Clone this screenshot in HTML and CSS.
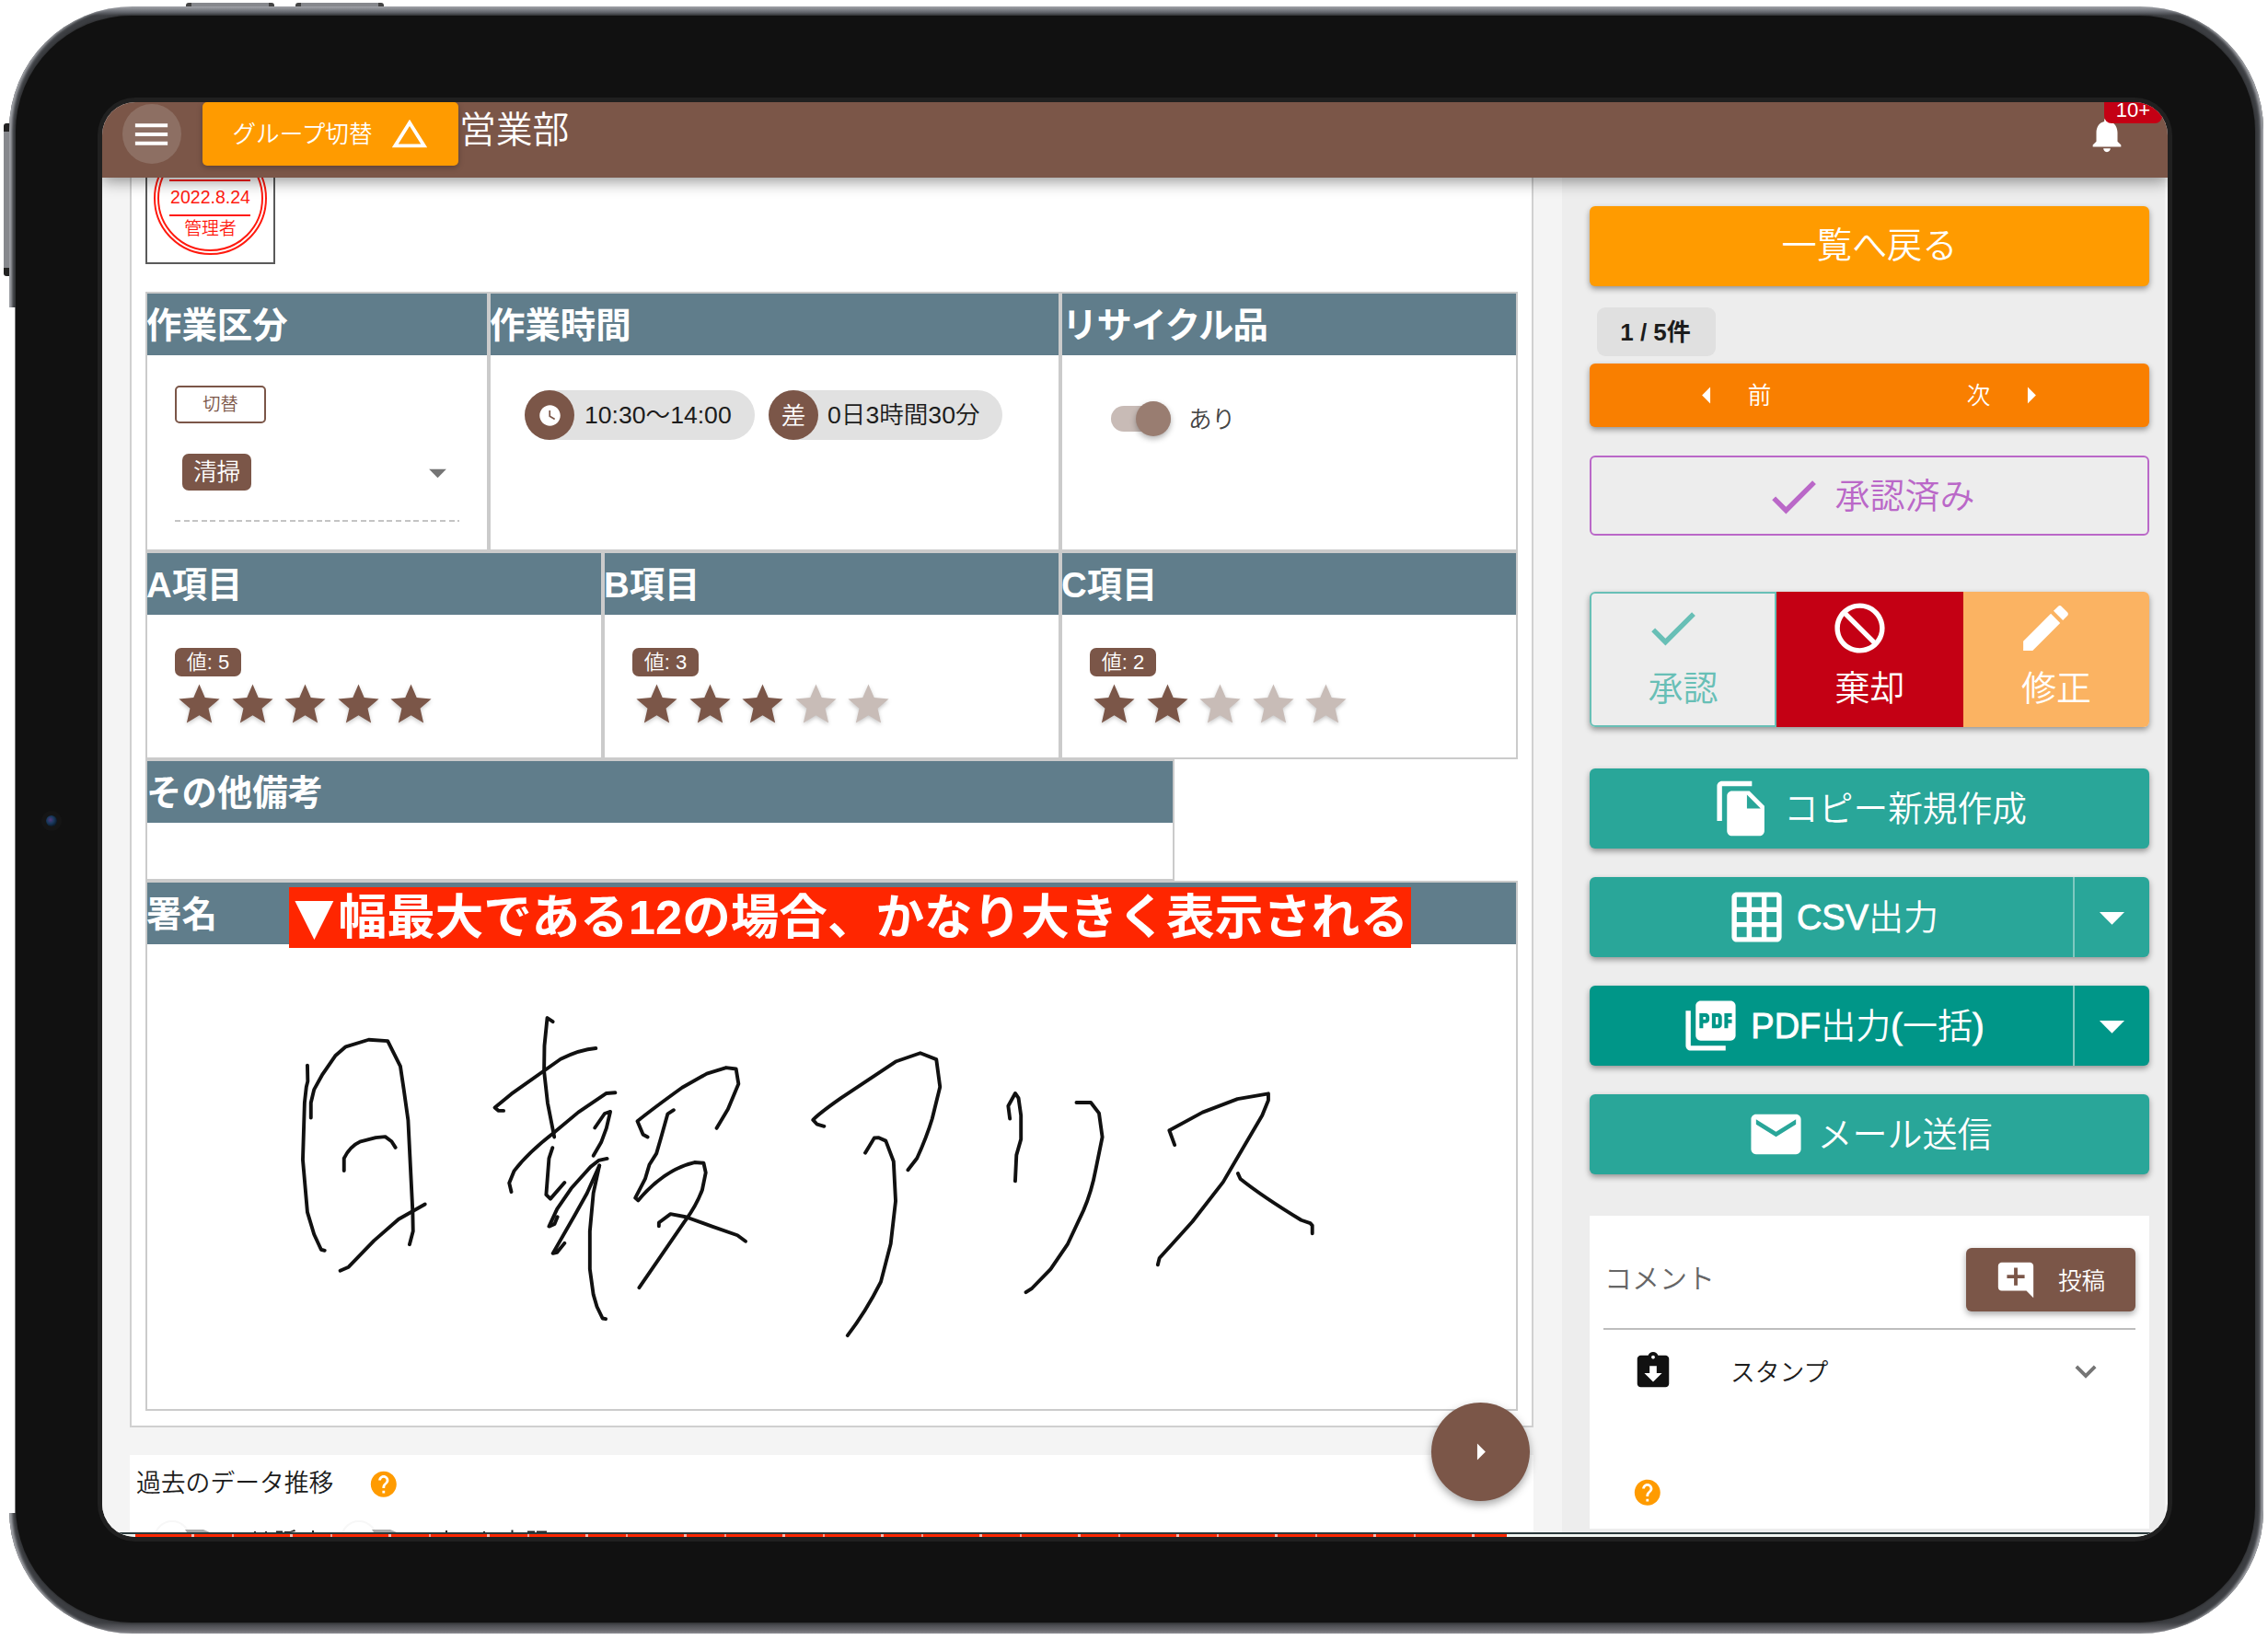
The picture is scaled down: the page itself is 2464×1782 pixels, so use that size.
FILE: index.html
```html
<!DOCTYPE html>
<html lang="ja">
<head>
<meta charset="utf-8">
<title>営業部 日報</title>
<link rel="stylesheet" href="styles.css">
</head>
<body>
<svg class="defs" width="0" height="0">
  <symbol id="i-star" viewBox="0 0 24 24"><path d="M12 17.27L18.18 21l-1.64-7.03L22 9.24l-7.19-.61L12 2 9.19 8.63 2 9.24l5.46 4.73L5.82 21z"/></symbol>
  <symbol id="i-check" viewBox="0 0 24 24"><path d="M9 16.17L4.83 12l-1.42 1.41L9 19 21 7l-1.41-1.41z"/></symbol>
  <symbol id="i-down" viewBox="0 0 24 24"><path d="M7 10l5 5 5-5z"/></symbol>
  <symbol id="i-right" viewBox="0 0 24 24"><path d="M10 17l5-5-5-5v10z"/></symbol>
  <symbol id="i-left" viewBox="0 0 24 24"><path d="M14 7l-5 5 5 5V7z"/></symbol>
  <symbol id="i-help" viewBox="0 0 24 24"><path d="M12 2C6.480 2 2 6.480 2 12s4.480 10 10 10 10-4.480 10-10S17.520 2 12 2zm1 17h-2v-2h2v2zm2.070-7.750l-.9.920C13.450 12.900 13 13.500 13 15h-2v-.5c0-1.100.45-2.100 1.170-2.830l1.240-1.260c.37-.36.59-.86.59-1.410 0-1.100-.9-2-2-2s-2 .9-2 2H8c0-2.210 1.790-4 4-4s4 1.790 4 4c0 .88-.36 1.680-.93 2.250z"/></symbol>
</svg>

<div class="device">
  <i class="key key-top-a"></i><i class="key key-top-b"></i><i class="key key-side"></i><i class="rim-gap"></i><i class="camera"></i>
  <div class="screen">
    <header class="bar">
      <button class="menu"><svg viewBox="0 0 24 24"><path d="M3 6h18v2H3zM3 11h18v2H3zM3 16h18v2H3z"/></svg></button>
      <button class="group"><span>グループ切替</span><svg viewBox="0 0 24 24"><path d="M12 7.770L18.390 18H5.610L12 7.770M12 4L2 20h20L12 4z"/></svg></button>
      <h1 class="title">営業部</h1>
      <div class="bell"><svg viewBox="0 0 24 24"><path d="M12 22c1.100 0 2-.9 2-2h-4c0 1.100.89 2 2 2zm6-6v-5c0-3.070-1.640-5.640-4.500-6.320V4c0-.83-.67-1.500-1.500-1.500s-1.500.67-1.500 1.500v.68C7.630 5.360 6 7.920 6 11v5l-2 2v1h16v-1l-2-2z"/></svg><span class="count">10+</span></div>
    </header>

    <div class="main">
      <section class="content">
        <article class="report">
          <div class="stamp">
            <svg viewBox="0 0 137 92" width="137" height="92">
              <g fill="none" stroke="#ff1a0f"><ellipse cx="68.500" cy="22.500" rx="60.500" ry="60.500" stroke-width="2"/><ellipse cx="68.500" cy="22.500" rx="56.500" ry="56.500" stroke-width="2"/><path d="M24 3h88M24 41h88" stroke-width="2.200"/></g>
            </svg>
            <span class="stamp-date">2022.8.24</span>
            <span class="stamp-name">管理者</span>
          </div>

          <div class="row row-work">
            <section class="cell">
              <h2>作業区分</h2>
              <div class="pick">
                <button class="swap">切替</button>
                <div class="choice"><span class="pill">清掃</span><svg><use href="#i-down"/></svg></div>
              </div>
            </section>
            <section class="cell">
              <h2>作業時間</h2>
              <div class="chips">
                <div class="chip"><b><svg viewBox="0 0 24 24"><path d="M12 2C6.500 2 2 6.500 2 12s4.500 10 10 10 10-4.500 10-10S17.500 2 12 2zm4.200 14.200L11 13V7h1.500v5.200l4.500 2.700-.8 1.300z"/></svg></b><span>10:30〜14:00</span></div>
                <div class="chip chip-diff"><b>差</b><span>0日3時間30分</span></div>
              </div>
            </section>
            <section class="cell">
              <h2 class="kana">リサイクル品</h2>
              <div class="switch"><i></i><span>あり</span></div>
            </section>
          </div>

          <div class="row row-rate">
            <section class="cell">
              <h2>A項目</h2>
              <div class="rate"><span class="value">値: 5</span>
                <div class="stars"><svg><use href="#i-star"/></svg><svg><use href="#i-star"/></svg><svg><use href="#i-star"/></svg><svg><use href="#i-star"/></svg><svg><use href="#i-star"/></svg></div></div>
            </section>
            <section class="cell">
              <h2>B項目</h2>
              <div class="rate"><span class="value">値: 3</span>
                <div class="stars"><svg><use href="#i-star"/></svg><svg><use href="#i-star"/></svg><svg><use href="#i-star"/></svg><svg class="off"><use href="#i-star"/></svg><svg class="off"><use href="#i-star"/></svg></div></div>
            </section>
            <section class="cell">
              <h2>C項目</h2>
              <div class="rate"><span class="value">値: 2</span>
                <div class="stars"><svg><use href="#i-star"/></svg><svg><use href="#i-star"/></svg><svg class="off"><use href="#i-star"/></svg><svg class="off"><use href="#i-star"/></svg><svg class="off"><use href="#i-star"/></svg></div></div>
            </section>
          </div>

          <div class="row row-note"><section class="cell"><h2>その他備考</h2></section></div>

          <div class="row row-sign">
            <section class="cell">
              <h2>署名</h2>
              <strong class="callout"><span class="mark">▼</span>幅最大である12の場合、かなり大きく表示される</strong>
              <svg class="signature" viewBox="160 1026 1487 505">
                <g transform="translate(280 940) scale(.38265 .34439)">
                  <path d="M141 632L142 682L138 700L133 750L128 930L141 1095L160 1165L180 1213L190 1216"/>
                  <path d="M151 797V750L160 708L184 660L220 602L250 573L315 551L369 555L405 635L415 710L427 805L440 1095L441 1155L431 1197"/>
                  <path d="M245 964V925Q262 887 292 872L335 860L362 857L380 872L391 891"/>
                  <path d="M234 1280L258 1268L330 1185L400 1117L475 1070"/>
                  <path d="M838 494L822 482L814 570L813 650L823 750L842 858"/>
                  <path d="M698 775L684 775L673 765L720 722L860 612Q915 582 960 578"/>
                  <path d="M720 1031L714 1003L728 965Q765 910 840 845L910 780L990 720L1015 718"/>
                  <path d="M957 829L985 784L1001 778L990 830L975 875L953 917"/>
                  <path d="M837 892L827 925L819 1040L831 1053L871 1002"/>
                  <path d="M992 926L968 932L945 952L890 1020L850 1085L827 1140L843 1132L851 1110"/>
                  <path d="M970 948L935 1035L900 1105L838 1225L850 1222L871 1193"/>
                  <path d="M970 948L953 1035L943 1155V1275L953 1355L963 1393L979 1430L988 1432"/>
                  <path d="M1107 858L1094 850L1078 808Q1120 770 1205 702L1275 658L1330 639L1358 643L1365 690L1335 770L1303 830"/>
                  <path d="M1181 773L1164 785L1145 860L1132 910L1112 945L1100 990L1072 1050L1080 1058Q1155 960 1240 938L1266 940L1272 970L1262 1025Q1245 1075 1215 1120L1083 1333"/>
                  <path d="M1139 1139V1128L1172 1101L1215 1110L1290 1140L1362 1168L1385 1187"/>
                </g>
                <g transform="translate(840 940) scale(.44643 .34439)">
                  <path d="M124 824L107 818L97 804Q110 785 165 735L298 620L358 593L397 613L406 700L387 800Q373 860 350 925L328 962"/>
                  <path d="M224 908L246 861L257 860L274 870L293 935L298 1060L286 1195L262 1315Q225 1410 181 1484"/>
                  <path d="M576 800L572 760L589 720L597 735L603 790V865L592 915L589 997"/>
                  <path d="M738 749H773L793 783L801 858L785 960Q775 1030 755 1090L717 1195L675 1275L630 1335L615 1348"/>
                  <path d="M977 883L964 837L1045 780L1130 738L1205 721V742L1190 790L1140 900L1095 1000L1020 1125L940 1240L936 1261"/>
                  <path d="M1131 973L1137 990Q1190 1045 1285 1120L1307 1130L1312 1137V1162"/>
                </g>
              </svg>
            </section>
          </div>
        </article>

        <section class="trend">
          <div class="trend-head"><span>過去のデータ推移</span><svg class="help"><use href="#i-help"/></svg></div>
          <svg class="trend-peek" viewBox="140 1650 500 15" width="500" height="15">
            <g fill="none" stroke="#f7f7f7" stroke-width="2"><circle cx="186" cy="1672" r="19"/><circle cx="389" cy="1672" r="19"/></g>
            <path fill="#aaa" d="M200 1662h20l7 3h-25zM403 1662h20l7 3h-25z"/>
            <path fill="#222" d="M275 1664h2v1h-2zM287 1664h2v1h-2zM299 1663.500h7v1.500h-7zM308 1664h6l5-2 1 2-6 1h-6zM338 1663h2v2h-2zM483 1663h2v2h-2zM524 1664h2v1h-2zM554.500 1662.500h2v2.500h-2zM572 1663.500h8v1.500h-8zM582 1663.500h11v1.500h-11z"/>
          </svg>
        </section>
        <button class="fab"><svg><use href="#i-right"/></svg></button>
      </section>

      <aside class="side">
        <button class="btn back"><span>一覧へ戻る</span></button>
        <span class="pos">1 / 5件</span>
        <div class="btn nav"><div class="prev"><svg><use href="#i-left"/></svg>前</div><div class="next">次<svg><use href="#i-right"/></svg></div></div>
        <div class="btn done"><svg><use href="#i-check"/></svg><span>承認済み</span></div>
        <div class="decide">
          <button class="ok"><svg><use href="#i-check"/></svg><span>承認</span></button>
          <button class="reject"><svg viewBox="0 0 24 24"><path d="M12 2C6.480 2 2 6.480 2 12s4.480 10 10 10 10-4.480 10-10S17.520 2 12 2zM4 12c0-4.420 3.580-8 8-8 1.850 0 3.550.63 4.900 1.690L5.690 16.900C4.630 15.550 4 13.850 4 12zm8 8c-1.850 0-3.550-.63-4.900-1.690L18.310 7.100C19.370 8.450 20 10.150 20 12c0 4.420-3.580 8-8 8z" transform="matrix(-1 0 0 1 24 0)"/></svg><span>棄却</span></button>
          <button class="edit"><svg viewBox="0 0 24 24"><path d="M3 17.250V21h3.750L17.810 9.940l-3.750-3.750L3 17.250zM20.710 7.040c.39-.39.39-1.020 0-1.410l-2.340-2.340c-.39-.39-1.020-.39-1.410 0l-1.830 1.830 3.750 3.750 1.830-1.830z"/></svg><span>修正</span></button>
        </div>
        <button class="btn act"><svg viewBox="0 0 24 24"><path d="M16 1H4c-1.100 0-2 .9-2 2v14h2V3h12V1zm-1 4l6 6v10c0 1.100-.9 2-2 2H7.990C6.890 23 6 22.100 6 21l.01-14c0-1.100.89-2 1.990-2h7zm-1 7h5.500L14 6.500V12z"/></svg><span>コピー新規作成</span></button>
        <div class="btn act split"><div class="face"><svg viewBox="0 0 24 24"><path d="M20 2H4c-1.100 0-2 .9-2 2v16c0 1.100.9 2 2 2h16c1.100 0 2-.9 2-2V4c0-1.100-.9-2-2-2zM8 20H4v-4h4v4zm0-6H4v-4h4v4zm0-6H4V4h4v4zm6 12h-4v-4h4v4zm0-6h-4v-4h4v4zm0-6h-4V4h4v4zm6 12h-4v-4h4v4zm0-6h-4v-4h4v4zm0-6h-4V4h4v4z"/></svg><span><em>CSV</em>出力</span></div><div class="drop"><svg><use href="#i-down"/></svg></div></div>
        <div class="btn act split deep"><div class="face"><svg viewBox="0 0 24 24"><path d="M20 2H8c-1.100 0-2 .9-2 2v12c0 1.100.9 2 2 2h12c1.100 0 2-.9 2-2V4c0-1.100-.9-2-2-2zm-8.500 7.500c0 .83-.67 1.500-1.500 1.500H9v2H7.500V7H10c.83 0 1.500.67 1.500 1.500v1zm5 2c0 .83-.67 1.500-1.500 1.500h-2.500V7H15c.83 0 1.500.67 1.500 1.500v3zm4-3H19v1h1.500V11H19v2h-1.500V7h3v1.500zM9 9.500h1v-1H9v1zM4 6H2v14c0 1.100.9 2 2 2h14v-2H4V6zm10 5.500h1v-3h-1v3z"/></svg><span><em>PDF</em>出力<em>(</em>一括<em>)</em></span></div><div class="drop"><svg><use href="#i-down"/></svg></div></div>
        <button class="btn act"><svg viewBox="0 0 24 24"><path d="M20 4H4c-1.100 0-1.990.9-1.990 2L2 18c0 1.100.9 2 2 2h16c1.100 0 2-.9 2-2V6c0-1.100-.9-2-2-2zm0 4l-8 5-8-5V6l8 5 8-5v2z"/></svg><span>メール送信</span></button>

        <section class="comments">
          <div class="comments-head"><span>コメント</span>
            <button class="post"><svg viewBox="0 0 24 24"><path d="M21.990 4c0-1.100-.89-2-1.990-2H4c-1.100 0-2 .9-2 2v12c0 1.100.9 2 2 2h14l4 4-.01-18zM17 11h-4v4h-2v-4H7V9h4V5h2v4h4v2z"/></svg><span>投稿</span></button></div>
          <div class="stamp-row"><svg viewBox="0 0 24 24"><path d="M19 3h-4.180C14.400 1.840 13.300 1 12 1c-1.300 0-2.400.84-2.820 2H5c-1.100 0-2 .9-2 2v14c0 1.100.9 2 2 2h14c1.100 0 2-.9 2-2V5c0-1.100-.9-2-2-2zm-7 0c.55 0 1 .45 1 1s-.45 1-1 1-1-.45-1-1 .45-1 1-1zm0 15l-5-5h3V9h4v4h3l-5 5z"/></svg><span>スタンプ</span><svg class="chev" viewBox="0 0 24 24"><path d="M16.590 8.590L12 13.170 7.410 8.590 6 10l6 6 6-6z"/></svg></div>
          <svg class="help"><use href="#i-help"/></svg>
        </section>
      </aside>
    </div>
    <div class="edge"><i></i></div>
  </div>
</div>
</body>
</html>
```
FILE: styles.css
```css
* { box-sizing: border-box; }
body { margin: 0; width: 2464px; height: 1782px; overflow: hidden; background: #fff; padding: 7px 5px 7px 10px; font-family: "Liberation Sans", "Noto Sans CJK JP", sans-serif; font-weight: 350; color: #1c1c1c; }
h1, h2 { margin: 0; }
em { font-style: normal; -webkit-text-stroke: .9px currentColor; }
button { border: 0; padding: 0; background: none; font: inherit; color: inherit; }
svg { fill: currentColor; display: block; flex: none; }
i { display: block; }
.defs { position: absolute; }

/* tablet body */
.device { position: relative; width: 2449px; height: 1768px; border-radius: 134px; background: linear-gradient(#a1a3a8, #70737a 5px, #3c3e42 10px, #3c3e42 1756px, #66666b 1764px, #85858a); box-shadow: inset 4px 0 3px -1px #a1a3a8, inset -4px 0 3px -1px #a1a3a8; padding: 10px 9px 12px 7px; }
.device::before { content: ""; position: absolute; inset: 10px 9px 12px 7px; border-radius: 126px; background: #111; box-shadow: 0 0 3px #222; }
.key { position: absolute; z-index: -1; background: #86888d; }
.key-top-a { left: 192px; top: -4px; width: 96px; height: 7px; border: solid #444; border-width: 0 6px; border-radius: 3px; }
.key-top-b { left: 311px; top: -4px; width: 96px; height: 7px; border: solid #444; border-width: 0 6px; border-radius: 3px; }
.key-side { left: -6px; top: 127px; width: 9px; height: 166px; border: solid #222; border-width: 9px 0; border-radius: 3px; }
.rim-gap { position: absolute; left: -2px; top: 327px; width: 9px; height: 1310px; background: #fff; border-right: 1px solid #777; }
.camera { position: absolute; left: 40px; top: 879px; width: 12px; height: 12px; border-radius: 50%; background: radial-gradient(circle at 40% 40%, #513a7c, #17395c 40%, #0d1b2c 70%); box-shadow: 0 0 0 5px #151515; }
.screen { position: relative; margin: 94px; width: 2244px; height: 1559px; border-radius: 36px; overflow: hidden; box-shadow: 0 0 0 5px #202020; background: #f4f4f4; display: flex; flex-direction: column; }

/* top bar */
.bar { position: relative; z-index: 2; height: 82px; flex: none; background: #7b5648; color: #fff; display: flex; align-items: flex-start; padding-left: 22px; box-shadow: 0 4px 16px rgba(0,0,0,.42); }
.menu { width: 64px; height: 65px; margin-top: 2px; border-radius: 50%; background: #8d6f63; display: flex; align-items: center; justify-content: center; padding-right: 1px; }
.menu svg { width: 47px; height: 48px; }
.group { margin-left: 23px; width: 278px; height: 69px; border-radius: 5px; background: #ff9b00; display: flex; align-items: center; justify-content: center; gap: 17px; font-size: 25.600px; padding: 0 0 4px 2px; box-shadow: 0 2px 6px rgba(0,0,0,.25); }
.group svg { width: 46px; height: 46px; position: relative; top: 1px; }
.title { margin-left: 1px; font-size: 39.800px; line-height: 61px; font-weight: 350; }
.bell { margin-left: auto; width: 89px; height: 60px; padding-top: 12px; position: relative; }
.bell svg { width: 46px; height: 46px; }
.count { position: absolute; left: 20px; top: 0; width: 63px; height: 23px; border-radius: 0 0 8px 8px; background: #c40014; font-size: 22px; line-height: 18px; text-align: center; }

.main { flex: none; height: 1472px; display: flex; }
.content { position: relative; width: 1586px; padding-left: 30px; background: #f4f4f4; overflow: hidden; }

/* report sheet */
.report { width: 1525px; height: 1358px; border: 2px solid #d0d0d0; border-top: 0; background: #fff; padding: 0 15px; }
.stamp { position: relative; width: 141px; height: 94px; border: 2px solid #5a5a5a; border-top: 0; color: #ff1a0f; text-align: center; margin-bottom: 30px; overflow: hidden; }
.stamp-date, .stamp-name { position: absolute; left: 0; width: 100%; line-height: 24px; }
.stamp-date { top: 9px; font-size: 19.500px; }
.stamp-name { top: 44px; font-size: 18.800px; }
.row { display: grid; width: 1491px; }
.row-work { grid-template-columns: 373px 621px 497px; height: 282px; }
.row-rate { grid-template-columns: repeat(3, 497px); height: 226px; }
.row-note { grid-template-columns: 1118px; height: 132px; }
.row-sign { grid-template-columns: 1491px; height: 576px; }
.cell { border: 2px solid #cbcbcb; position: relative; min-width: 0; }
.cell h2 { height: 67px; background: #607d8b; color: #fff; font-size: 38.400px; line-height: 69px; font-weight: 700; white-space: nowrap; text-indent: -1px; }
.cell .kana { letter-spacing: -.9px; text-indent: 0; }
.pick { padding: 33px 30px 0; }
.swap { display: block; width: 99px; height: 41px; border: 2px solid #7b5648; border-radius: 5px; color: #7b5648; font-size: 19.200px; line-height: 36px; }
.choice { margin-top: 19px; height: 88px; padding: 14px 1px 0 8px; display: flex; justify-content: space-between; align-items: flex-start; color: #757575; background: repeating-linear-gradient(90deg, #c4c4c4 0 6px, transparent 6px 9.600px) bottom/100% 2px no-repeat; }
.pill { width: 75px; height: 40px; border-radius: 7px; background: #7b5648; color: #fff; font-size: 25.600px; line-height: 40px; text-align: center; }
.choice svg { width: 45px; height: 45px; margin-top: -2px; }
.chips { display: flex; gap: 15px; padding: 38px 0 0 37px; }
.chip { width: 250px; height: 54px; border-radius: 27px; background: #e1e1e1; display: flex; font-size: 26.600px; line-height: 54px; white-space: nowrap; }
.chip-diff { width: 254px; }
.chip b { width: 54px; height: 54px; border-radius: 50%; background: #7b5648; color: #fff; margin-right: 11px; display: flex; align-items: center; justify-content: center; font-weight: 350; line-height: 50px; padding-top: 1px; }
.chip-diff b { margin-right: 10px; }
.chip b svg { width: 27px; height: 27px; }
.switch { display: flex; align-items: center; padding: 50px 0 0 53px; height: 88px; font-size: 25.600px; color: #444; }
.switch span { margin-top: -4px; }
.switch i { position: relative; width: 65px; height: 28px; border-radius: 14px; background: #c8bbb6; margin-right: 19px; }
.switch i::after { content: ""; position: absolute; right: 0; top: -5px; width: 38px; height: 38px; border-radius: 50%; background: #997d71; box-shadow: 0 3px 6px rgba(0,0,0,.3); }
.rate { padding: 36px 0 0 30px; }
.value { display: block; width: 72px; height: 31px; border-radius: 7px; background: #7b5648; color: #fff; font-size: 22px; line-height: 32px; text-align: center; }
.stars { display: flex; gap: 4.600px; margin-top: 4px; color: #7b5648; }
.stars svg { width: 53px; height: 53px; filter: drop-shadow(0 2px 2px rgba(0,0,0,.22)); }
.stars .off { color: #c8bcb7; }
.callout { position: absolute; left: 154px; top: 5px; width: 1219px; height: 66px; padding-left: 1px; background: #ff2600; color: #fff; font-size: 52.600px; line-height: 66px; white-space: nowrap; font-weight: 700; }
.mark { display: inline-block; width: 52.600px; text-align: center; transform: scale(1.360); transform-origin: 50% 55%; }
.signature { width: 1487px; height: 505px; fill: none; stroke: #111; stroke-linecap: round; stroke-linejoin: round; }
.signature path { vector-effect: non-scaling-stroke; stroke-width: 3.900px; }

.trend { width: 1525px; height: 84px; margin-top: 30px; background: #fff; }
.trend-head { display: flex; align-items: center; height: 60px; padding: 0 0 3px 7px; font-size: 26.800px; gap: 38px; }
.trend-head .help { margin-top: 6px; }
.trend-peek { margin-top: 9px; }
.help { width: 33.600px; height: 33.600px; color: #ff9b00; }
.fab { position: absolute; left: 1444px; top: 1331px; width: 107px; height: 107px; border-radius: 50%; background: #7b5648; color: #fff; display: flex; align-items: center; justify-content: center; box-shadow: 0 4px 10px rgba(0,0,0,.35); }
.fab svg { width: 43px; height: 43px; }

/* side panel */
.side { width: 655px; padding: 31px 17px 0 30px; background: #ededed; font-size: 38px; }
.btn { width: 608px; height: 87px; border-radius: 6px; color: #fff; display: flex; align-items: center; justify-content: center; box-shadow: 0 3px 6px rgba(0,0,0,.38); line-height: 56px; padding-bottom: 3px; }
.btn span { padding-top: 4px; }
.back { background: #ff9b00; font-size: 38.200px; }
.back span { padding-top: 2px; }
.pos { display: block; width: 129px; height: 53px; margin: 23px 0 8px 8px; border-radius: 9px; background: #e0e0e0; font-size: 26px; font-weight: 700; line-height: 54px; text-align: center; padding-right: 2px; }
.nav { height: 69px; background: #f97f00; font-size: 25.600px; padding: 0; }
.nav div { flex: 1; display: flex; align-items: center; justify-content: center; gap: 23px; }
.nav svg { width: 43px; height: 43px; }
.prev { padding-right: 1px; }
.next { padding-right: 1px; }
.done { margin-top: 31px; border: 2px solid #ba68c8; background: none; color: #ba68c8; box-shadow: none; gap: 12px; padding: 0 0 3px; }
.btn svg { position: relative; }
.done svg, .act .face svg, .act > svg, .decide svg { width: 65px; height: 65px; }
.done svg { top: 2px; }
.decide { display: flex; width: 608px; height: 147px; margin-top: 61px; border-radius: 6px; box-shadow: 0 3px 6px rgba(0,0,0,.38); background: #ededed; overflow: visible; }
.decide button { flex: none; width: 203px; display: flex; flex-direction: column; align-items: center; justify-content: flex-start; padding-top: 7px; line-height: 67px; }
.decide svg { margin-right: 23px; }
.ok { border: 2px solid #68bfb6; color: #68bfb6; border-radius: 6px 0 0 6px; }
.decide .ok { padding-top: 5px; }
.reject { background: #c40014; color: #fff; }
.decide .edit { width: 202px; background: #fbb362; color: #fff; border-radius: 0 6px 6px 0; }
.act { margin-top: 31px; background: #29a699; gap: 12px; }
.act > svg { top: 1px; }
.decide + .act { margin-top: 45px; gap: 13px; font-size: 37.700px; }
.split { padding: 0; gap: 0; background: #29a699; }
.face { flex: 1; display: flex; align-items: center; justify-content: center; gap: 11px; padding: 0 0 3px 3px; }
.face svg { top: 1px; }
.face span { white-space: nowrap; }
.drop { width: 83px; height: 100%; border-left: 2px solid #7fc9c0; display: flex; align-items: center; justify-content: center; }
.drop svg { width: 65px; height: 65px; }
.act.deep { background: #009688; }

.comments { margin-top: 45px; height: 340px; background: #fff; padding: 35px 15px 0; }
.comments-head { display: flex; justify-content: space-between; height: 89px; border-bottom: 2px solid #bdbdbd; color: #666; font-size: 30px; padding-left: 1px; }
.comments-head > span { line-height: 68px; }
.post { width: 184px; height: 69px; border-radius: 6px; background: #7b5648; color: #fff; display: flex; align-items: center; justify-content: center; gap: 23px; font-size: 25.600px; box-shadow: 0 3px 7px rgba(0,0,0,.35); padding-right: 2px; }
.post span { margin-top: -3px; }
.post svg { width: 46px; height: 46px; margin-top: -4px; position: relative; top: 2px; }
.stamp-row { display: flex; align-items: center; height: 90px; padding: 0 31px 0 31px; font-size: 26.800px; }
.stamp-row span { margin-left: 61px; margin-top: -2px; }
.stamp-row svg { width: 46px; height: 46px; color: #111; }
.stamp-row .chev { margin-left: auto; color: #757575; }
.comments .help { margin: 70px 0 0 31px; }

.edge { height: 5px; background: #f1f5f1; border-top: 2px solid #2b3a3c; padding-left: 36px; }
.edge i { width: 1490px; height: 3px; background: repeating-linear-gradient(90deg, #ff2600 0 61px, #ffb8ac 61px 64px, #ff2600 64px 105px, #ff9c8a 105px 107px); }
```
